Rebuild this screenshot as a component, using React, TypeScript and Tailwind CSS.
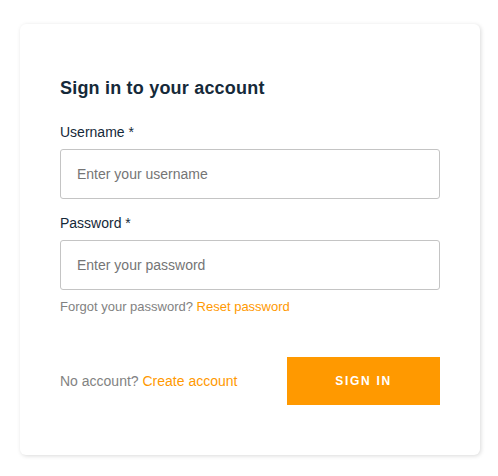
export default function App() {
  return (
    <div className="min-h-screen bg-white pt-[24px] pl-[20px]" style={{ fontFamily: '"Liberation Sans", Arial, sans-serif' }}>
      <div className="w-[460px] rounded-[6px] bg-white px-[40px] pt-[52px] pb-[50px] shadow-[1px_1px_4px_0_rgba(0,0,0,0.15)]">
        <h2 className="text-[18px] leading-[24px] font-bold tracking-[0.2px] text-[#152939]">Sign in to your account</h2>

        <label className="mt-[23px] block text-[14px] leading-[18px] text-[#152939]">Username *</label>
        <input
          className="mt-[8px] block h-[50px] w-full rounded-[3px] border border-[#c4c4c4] px-[16px] text-[14px] text-[#152939] outline-none placeholder:text-[#757575]"
          placeholder="Enter your username"
        />

        <label className="mt-[15px] block text-[14px] leading-[18px] text-[#152939]">Password *</label>
        <input
          type="password"
          className="mt-[8px] block h-[50px] w-full rounded-[3px] border border-[#c4c4c4] px-[16px] text-[14px] text-[#152939] outline-none placeholder:text-[#757575]"
          placeholder="Enter your password"
        />

        <div className="mt-[9px] text-[13px] leading-[16px] text-[#828282]">
          Forgot your password? <a className="text-[#ff9900]">Reset password</a>
        </div>

        <div className="mt-[42px] flex items-center justify-between">
          <span className="text-[14px] text-[#828282]">
            No account? <a className="text-[#ff9900]">Create account</a>
          </span>
          <button className="h-[48px] w-[153px] bg-[#ff9900] text-[12px] font-bold tracking-[1.7px] text-white">
            SIGN IN
          </button>
        </div>
      </div>
    </div>
  )
}
